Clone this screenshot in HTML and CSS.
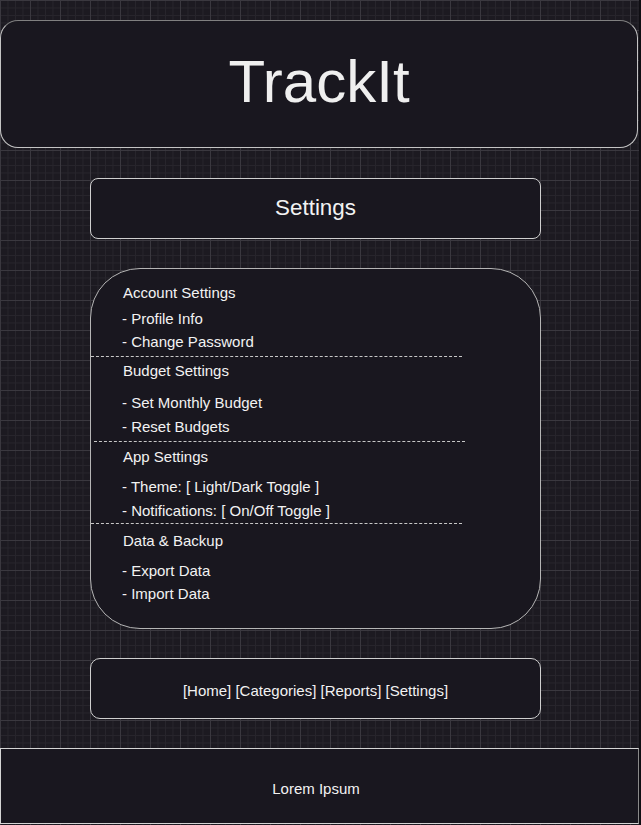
FILE: index.html
```html
<!DOCTYPE html>
<html lang="en">
<head>
<meta charset="utf-8">
<title>TrackIt - Settings</title>
<link rel="stylesheet" href="styles.css">
</head>
<body>
<div class="page">
  <header class="hero">TrackIt</header>

  <div class="title-box">Settings</div>

  <section class="card">
    <div class="group group-1">
      <div class="heading">Account Settings</div>
      <div class="item first">- Profile Info</div>
      <div class="item">- Change Password</div>
    </div>
    <div class="divider d1"></div>
    <div class="group group-2">
      <div class="heading">Budget Settings</div>
      <div class="item first">- Set Monthly Budget</div>
      <div class="item">- Reset Budgets</div>
    </div>
    <div class="divider d2"></div>
    <div class="group group-3">
      <div class="heading">App Settings</div>
      <div class="item first">- Theme: [ Light/Dark Toggle ]</div>
      <div class="item">- Notifications: [ On/Off Toggle ]</div>
    </div>
    <div class="divider d3"></div>
    <div class="group group-4">
      <div class="heading">Data &amp; Backup</div>
      <div class="item first">- Export Data</div>
      <div class="item">- Import Data</div>
    </div>
  </section>

  <nav class="nav-box">[Home] [Categories] [Reports] [Settings]</nav>

  <footer class="footer">Lorem Ipsum</footer>
</div>
</body>
</html>
```

FILE: styles.css
```css
html {
  background: #0f0e13;
}

body {
  margin: 0;
  font-family: "Liberation Sans", Arial, sans-serif;
  color: #f2f2f2;
}

.page {
  width: 639px;
  height: 825px;
  box-sizing: border-box;
  padding-top: 20px;
  overflow: hidden;
  background-color: #1c1a21;
  background-image:
    linear-gradient(to right, #3a383f 1px, transparent 1px),
    linear-gradient(to bottom, #3a383f 1px, transparent 1px),
    linear-gradient(to right, #27252c 1px, transparent 1px),
    linear-gradient(to bottom, #27252c 1px, transparent 1px);
  background-size: 30px 30px, 30px 30px, 7.5px 7.5px, 7.5px 7.5px;
}

.hero {
  width: 638px;
  height: 128px;
  box-sizing: border-box;
  border: 1px solid #c4c4c4;
  border-top-color: #808080;
  border-radius: 18px;
  background: #19171f;
  display: flex;
  align-items: center;
  justify-content: center;
  font-size: 60px;
  color: #efefef;
  padding-bottom: 6px;
}

.title-box {
  margin: 30px 0 0 90px;
  width: 451px;
  height: 61px;
  box-sizing: border-box;
  border: 1px solid #cfcfcf;
  border-radius: 8px;
  background: #19171f;
  display: flex;
  align-items: center;
  justify-content: center;
  font-size: 22.4px;
  padding-bottom: 2px;
}

.card {
  margin: 29px 0 0 90px;
  width: 451px;
  height: 361px;
  box-sizing: border-box;
  border: 1px solid #b5b5b5;
  border-radius: 50px;
  background: #19171f;
  padding-top: 15px;
  font-size: 15px;
  line-height: 18px;
}

.heading,
.item {
  padding-left: 32px;
  height: 18px;
  white-space: nowrap;
}

.item {
  margin-top: 5px;
  padding-left: 31px;
}

.group-1 .item.first { margin-top: 8px; }
.group-2 .heading { margin-top: 5px; }
.group-2 .item.first { margin-top: 14px; }
.group-2 .item { margin-top: 6px; }
.group-3 .heading { margin-top: 6px; }
.group-3 .item.first { margin-top: 12px; }
.group-3 .item { margin-top: 6px; }
.group-4 .heading { margin-top: 8px; }
.group-4 .item.first { margin-top: 12px; }

.divider {
  height: 0;
  border-top: 1px dashed #c8c8c8;
  width: 371px;
}

.d1 { margin-top: 5px; }
.d2 { margin-top: 5px; margin-left: 3px; }
.d3 { margin-top: 3px; }

.nav-box {
  margin: 29px 0 0 90px;
  width: 451px;
  height: 61px;
  box-sizing: border-box;
  border: 1px solid #cfcfcf;
  border-radius: 10px;
  background: #19171f;
  display: flex;
  align-items: center;
  justify-content: center;
  font-size: 15px;
  padding-top: 3px;
}

.footer {
  margin-top: 29px;
  width: 639px;
  height: 76px;
  box-sizing: border-box;
  border: 1px solid #d4d4d4;
  border-right-color: #8a8a8a;
  background: #19171f;
  display: flex;
  align-items: center;
  justify-content: center;
  font-size: 15px;
  padding-right: 7px;
  padding-top: 4px;
}
```
